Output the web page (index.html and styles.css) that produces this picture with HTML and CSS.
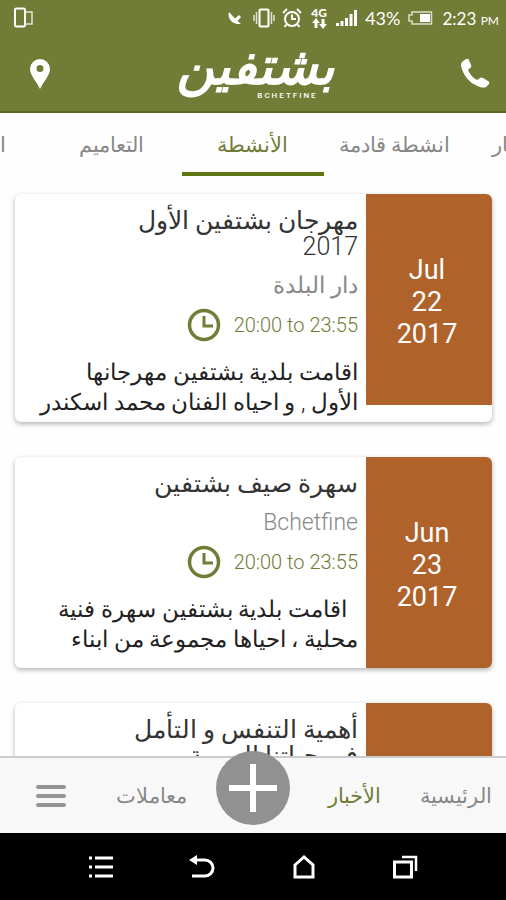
FILE: index.html
```html
<!DOCTYPE html>
<html lang="ar" dir="rtl">
<head>
  <meta charset="UTF-8">
  <meta name="viewport" content="width=device-width, initial-scale=1.0">
  <title>بشتفين</title>
  <link rel="stylesheet" href="styles.css">
</head>
<body>
  <div class="status-bar" dir="ltr">
    <svg class="status-phone" width="20" height="22" viewBox="0 0 20 22" fill="none" stroke="#fff">
      <rect x="1" y="1.500" width="10" height="18" rx="1.500" stroke-width="2"/>
      <path d="M12 5h6v12h-6" stroke-width="1.500" opacity=".8"/>
    </svg>
    <svg width="14" height="14" viewBox="0 0 14 14" fill="#fff">
      <path d="M1 1C-1 7 4 14 13 13L9.500 10 13 6l-2-2-4 3.500z"/>
    </svg>
    <svg class="status-vibrate" width="22" height="20" viewBox="0 0 22 20" fill="none" stroke="#fff">
      <rect x="6.500" y="1.500" width="9" height="17" rx="1" stroke-width="2"/>
      <path d="M3.500 4v12M18.500 4v12M1 7v6M21 7v6" stroke-width="1.500" opacity=".8"/>
    </svg>
    <svg width="20" height="20" viewBox="0 0 20 20" fill="none" stroke="#fff" stroke-width="2">
      <circle cx="10" cy="11" r="7"/>
      <path d="M10 6.500V11h4M1 5l4-4M19 5l-4-4M4.500 16.500L2.500 19M15.500 16.500l2 2.500"/>
    </svg>
    <div class="network">
      <span>4G</span>
      <svg width="15" height="11" viewBox="0 0 15 11" fill="#fff">
        <path d="M4 0l4 5H5.500v5h-3V5H0zM11 11L7 6h2.500V1h3v5H15z"/>
      </svg>
    </div>
    <svg width="22" height="16" viewBox="0 0 22 16" fill="#fff">
      <path d="M0 13h3v3H0zM4.500 11h3v5h-3zM9 8h3v8H9zM13.500 4h3v12h-3zM18 0h3v16h-3z"/>
    </svg>
    <span class="battery-level">43%</span>
    <svg class="battery" width="26" height="14" viewBox="0 0 26 14">
      <path d="M5 1h19.500v12H5v-3H2V4h3z" fill="none" stroke="#fff" stroke-width="1.500" opacity=".75"/>
      <rect x="13" y="3" width="10" height="8" fill="#fff"/>
    </svg>
    <span class="clock">2:23 <small>PM</small></span>
  </div>

  <header class="header" dir="ltr">
    <button class="icon-button" aria-label="الموقع">
      <svg width="20" height="30" viewBox="0 0 20 30" fill="#fff">
        <path fill-rule="evenodd" d="M10 0a10 10 0 0 1 10 10c0 6-6 12-10 20C6 22 0 16 0 10A10 10 0 0 1 10 0zm0 6a3.500 3.500 0 1 0 0 7 3.500 3.500 0 0 0 0-7z"/>
      </svg>
    </button>
    <div class="logo">
      <span class="logo-name">بشتفين</span>
      <span class="logo-latin">BCHETFINE</span>
    </div>
    <button class="icon-button" aria-label="اتصال">
      <svg width="29" height="29" viewBox="0 0 29 29" fill="#fff">
        <path d="M1 3L5 0q2-1 3 1l2 5q1 2-1 3L7 11q3 7 9 10l3-2q1-1 3 0l5 3q2 1 1 3l-3 3q-2 1-6 0Q4 23 0 7 0 4 1 3z"/>
      </svg>
    </button>
  </header>

  <nav class="tabs">
    <a href="#">آخر الأخبار</a>
    <a href="#">انشطة قادمة</a>
    <a href="#" class="active">الأنشطة</a>
    <a href="#">التعاميم</a>
    <a href="#">المجلس</a>
  </nav>

  <main class="events">
    <article class="card">
      <div class="date" dir="ltr">Jul<br>22<br>2017</div>
      <div class="info">
        <h2>مهرجان بشتفين الأول<br>2017</h2>
        <p class="place">دار البلدة</p>
        <div class="time">
          <span dir="ltr">20:00 to 23:55</span>
          <svg width="34" height="34" viewBox="0 0 34 34" fill="none" stroke="#717d36">
            <circle cx="17" cy="17" r="14.500" stroke-width="3.500"/>
            <path d="M17 8v10h9" stroke-width="3"/>
          </svg>
        </div>
        <p class="description">اقامت بلدية بشتفين مهرجانها<br>الأول , و احياه الفنان محمد اسكندر</p>
      </div>
    </article>

    <article class="card">
      <div class="date" dir="ltr">Jun<br>23<br>2017</div>
      <div class="info">
        <h2>سهرة صيف بشتفين</h2>
        <p class="place">Bchetfine</p>
        <div class="time">
          <span dir="ltr">20:00 to 23:55</span>
          <svg width="34" height="34" viewBox="0 0 34 34" fill="none" stroke="#717d36">
            <circle cx="17" cy="17" r="14.500" stroke-width="3.500"/>
            <path d="M17 8v10h9" stroke-width="3"/>
          </svg>
        </div>
        <p class="description">&nbsp; اقامت بلدية بشتفين سهرة فنية<br>محلية ، احياها مجموعة من ابناء</p>
      </div>
    </article>

    <article class="card">
      <div class="date"></div>
      <div class="info">
        <h2>أهمية التنفس و التأمل<br>في حياتنا اليومية</h2>
      </div>
    </article>
  </main>

  <nav class="bottom-nav">
    <a href="#">الرئيسية</a>
    <a href="#" class="active">الأخبار</a>
    <button class="add" aria-label="إضافة">
      <svg width="48" height="48" viewBox="0 0 48 48" stroke="#fff" stroke-width="6">
        <path d="M24 0v48M0 24h48"/>
      </svg>
    </button>
    <a href="#">معاملات</a>
    <button class="menu" aria-label="القائمة">
      <svg width="30" height="22" viewBox="0 0 30 22" stroke="#959595" stroke-width="4" stroke-linecap="round">
        <path d="M2 2h26M2 11h26M2 20h26"/>
      </svg>
    </button>
  </nav>

  <div class="system-bar" dir="ltr">
    <button aria-label="خيارات">
      <svg width="26" height="24" viewBox="0 0 26 24" stroke="#fff" stroke-width="3">
        <path d="M1 3h3M7 3h18M1 12h3M7 12h18M1 21h3M7 21h18"/>
      </svg>
    </button>
    <button aria-label="رجوع">
      <svg width="26" height="24" viewBox="0 0 26 24" fill="none" stroke="#fff" stroke-width="3">
        <path d="M6 5h10a8 8 0 0 1 0 16H3"/>
        <path d="M0 5l8-5v10z" fill="#fff" stroke="none"/>
      </svg>
    </button>
    <button aria-label="الشاشة الرئيسية">
      <svg width="24" height="24" viewBox="0 0 24 24" fill="none" stroke="#fff" stroke-width="3">
        <path d="M3 10l9-8 9 8v12H3z"/>
      </svg>
    </button>
    <button aria-label="التطبيقات">
      <svg width="26" height="24" viewBox="0 0 26 24" fill="none" stroke="#fff" stroke-width="3">
        <path d="M2.500 7h17v15h-17z"/>
        <path d="M10 2h14v14" stroke-width="2.500"/>
      </svg>
    </button>
  </div>
</body>
</html>
```
FILE: styles.css
```css
* {
  box-sizing: border-box;
}

body {
  font-family: Roboto, "DejaVu Sans", sans-serif;
  font-weight: 300;
  background-color: #fefefe;
  display: flex;
  flex-direction: column;
  height: 100vh;
  margin: 0;
  overflow: hidden;
}

button {
  background: none;
  border: none;
  padding: 0;
  cursor: pointer;
}

a {
  text-decoration: none;
}

svg {
  display: block;
  flex: none;
}

.status-bar {
  background-color: #717d36;
  color: white;
  font-family: Lato, sans-serif;
  font-weight: 400;
  font-size: 18px;
  display: flex;
  align-items: center;
  gap: 7px;
  height: 36px;
  padding: 0 7px 0 14px;
}

.status-phone {
  margin-right: auto;
}

.status-vibrate {
  margin-left: 4px;
}

.network {
  display: flex;
  flex-direction: column;
  align-items: center;
  width: 20px;
  font-size: 12px;
  font-weight: 900;
  line-height: 10px;
}

.clock {
  margin-left: 2px;
  font-size: 17px;
}

.clock small {
  font-size: 12px;
}

.header {
  background-color: #717d36;
  border-bottom: 2px solid #59661c;
  display: flex;
  justify-content: space-between;
  align-items: center;
  height: 77px;
  padding: 0 16px 0 30px;
}

.logo {
  color: white;
  display: flex;
  flex-direction: column;
  align-items: center;
}

.logo-name {
  font-family: "DejaVu Sans", sans-serif;
  font-weight: bold;
  font-style: italic;
  font-size: 52px;
  line-height: 40px;
}

.logo-latin {
  padding: 4px 0 0 64px;
  font-size: 8px;
  font-weight: 500;
  letter-spacing: 2px;
  line-height: 12px;
}

.tabs {
  display: flex;
  justify-content: center;
  height: 63px;
  flex: none;
  overflow: hidden;
}

.tabs a {
  flex: 0 0 28%;
  padding-top: 4px;
  border-bottom: 4px solid transparent;
  color: #888;
  font-size: 21px;
  line-height: 56px;
  text-align: center;
  white-space: nowrap;
}

.tabs a.active {
  color: #717d36;
  border-bottom-color: #5d7611;
}

.events {
  flex: 1;
  min-height: 0;
  overflow: hidden;
  padding: 18px 14px 0 15px;
}

.card {
  background-color: white;
  display: flex;
  align-items: flex-start;
  min-height: 211px;
  margin-bottom: 35px;
  border-radius: 6px;
  box-shadow: 0 2px 5px rgba(0, 0, 0, 0.3);
  overflow: hidden;
}

.date {
  background-color: #af622a;
  color: white;
  display: flex;
  flex-direction: column;
  justify-content: center;
  flex: none;
  width: 126px;
  height: 211px;
  padding: 4px 4px 0 0;
  font-size: 27px;
  font-weight: 400;
  line-height: 32px;
  text-align: center;
}

.info {
  flex: 1;
  min-width: 0;
  padding: 14px 8px 4px;
  white-space: nowrap;
}

.info h2 {
  margin: 0;
  color: #333;
  font-size: 25px;
  font-weight: 300;
  line-height: 26px;
}

.place {
  margin: 14px 0 10px;
  color: #888;
  font-size: 23px;
  line-height: 24px;
}

.time {
  display: flex;
  align-items: center;
  gap: 13px;
  color: #717d36;
  font-size: 20px;
}

.description {
  margin: 16px 0 0;
  color: #222;
  font-size: 23px;
  line-height: 30px;
}

.bottom-nav {
  background-color: #f8f8f8;
  border-top: 2px solid #ccc;
  display: flex;
  align-items: center;
  flex: none;
  height: 77px;
}

.bottom-nav a,
.bottom-nav button {
  flex: 1;
  display: flex;
  justify-content: center;
}

.bottom-nav a {
  color: #888;
  font-size: 21px;
}

.bottom-nav a.active {
  color: #717d36;
}

.bottom-nav .add {
  background-color: #919191;
  border-radius: 50%;
  flex: none;
  align-items: center;
  width: 74px;
  height: 74px;
  margin: 0 14px 16px;
}

.system-bar {
  background-color: black;
  display: flex;
  align-items: center;
  flex: none;
  height: 67px;
  padding: 0 10%;
}

.system-bar button {
  flex: 1;
  display: flex;
  justify-content: center;
}
```
